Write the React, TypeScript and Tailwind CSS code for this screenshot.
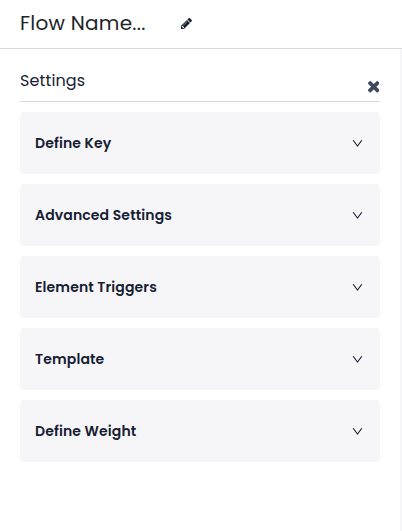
import { AiOutlineDown } from "react-icons/ai";

const sections = ["Define Key", "Advanced Settings", "Element Triggers", "Template", "Define Weight"];

function PencilIcon() {
  return (
    <svg viewBox="0 0 1792 1792" className="h-[13px] w-[13px] fill-[#172033]">
      <path d="M491 1536l91-91-235-235-91 91v107h128v128h107zm523-928q0-22-22-22-10 0-17 7l-542 542q-7 7-7 17 0 22 22 22 10 0 17-7l542-542q7-7 7-17zm-54-192l416 416-832 832h-416v-416zm683 96q0 53-37 90l-166 166-416-416 166-165q36-38 90-38 53 0 91 38l235 234q37 39 37 91z" />
    </svg>
  );
}

function CloseIcon() {
  return (
    <svg viewBox="302 366 1188 1188" className="h-[11.5px] w-[11.5px] fill-[#3f4a60]">
      <path d="M1490 1322q0 40-28 68l-136 136q-28 28-68 28t-68-28l-294-294-294 294q-28 28-68 28t-68-28l-136-136q-28-28-28-68t28-68l294-294-294-294q-28-28-28-68t28-68l136-136q28-28 68-28t68 28l294 294 294-294q28-28 68-28t68 28l136 136q28 28 28 68t-28 68l-294 294 294 294q28 28 28 68z" />
    </svg>
  );
}

export default function App() {
  return (
    <div className="flex h-[531px] w-[402px] flex-col overflow-hidden bg-white font-[Poppins,Inter,sans-serif] text-[#172033]">
      <header className="flex h-[49px] shrink-0 items-center border-b border-[#d9d9e6] pb-[2px] pl-5">
        <h1 className="w-[160px] whitespace-nowrap text-[20px] leading-6 tracking-[0.25px] text-[#212529]">Flow Name...</h1>
        <button aria-label="Edit flow name" className="mt-px"><PencilIcon /></button>
      </header>
      <main className="flex-1 border-r-2 border-[#f6f6f8] px-5">
        <div className="flex h-[53px] justify-between border-b border-[#d9d9e2]">
          <h2 className="pt-5 text-[16px] leading-6 tracking-[0.12px]">Settings</h2>
          <button aria-label="Close settings" className="mt-8 mr-px h-3"><CloseIcon /></button>
        </div>
        <div className="mt-[10px] flex flex-col gap-[10px]">
          {sections.map((title) => (
            <button key={title} className="flex h-[62px] items-center justify-between rounded-[4px] bg-[#f6f6f8] px-[15px]">
              <span className="text-[14px] leading-5 font-semibold tracking-[0.13px]">{title}</span>
              <AiOutlineDown className="mr-px h-[13px] w-[13px]" />
            </button>
          ))}
        </div>
      </main>
    </div>
  );
}
